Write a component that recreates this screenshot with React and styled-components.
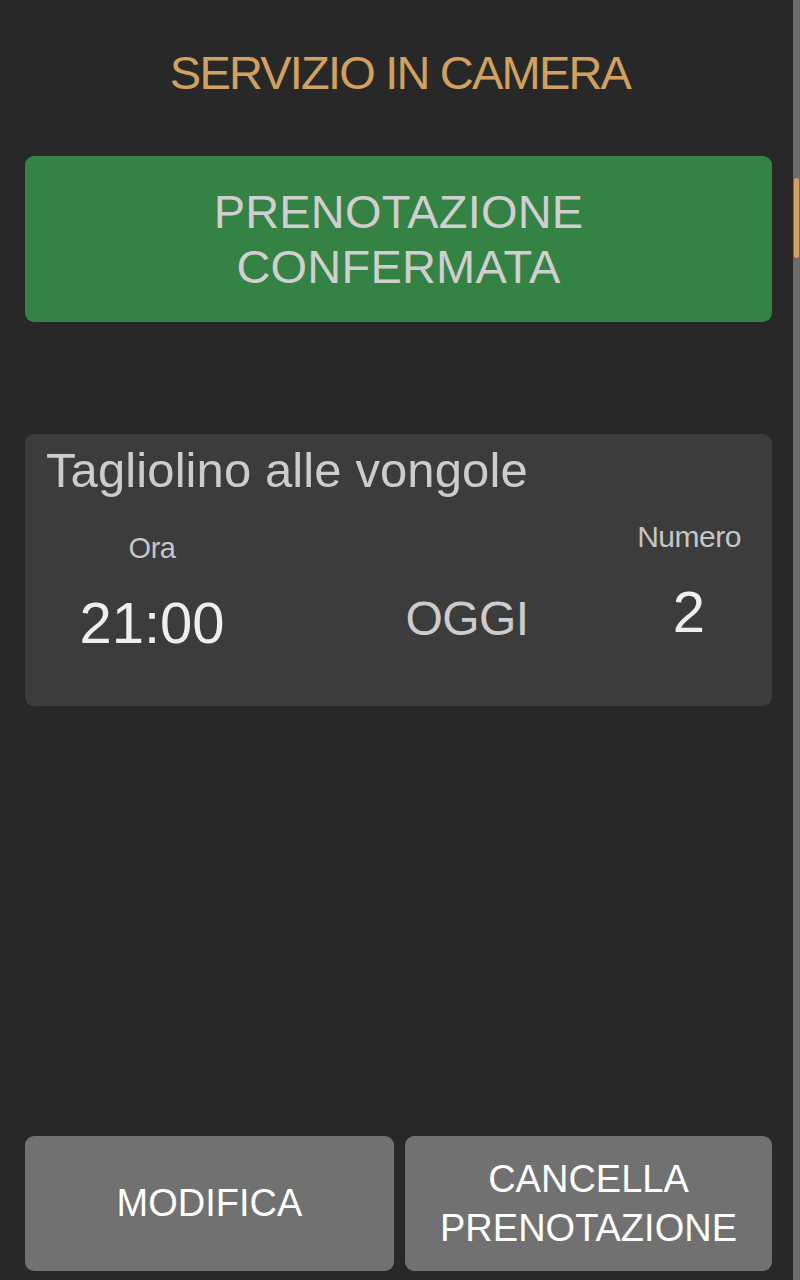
import React from "react";
import styled, { createGlobalStyle } from "styled-components";

const Global = createGlobalStyle`
  html, body {
    margin: 0;
    padding: 0;
    background: #282828;
  }
  body {
    font-family: "Liberation Sans", Arial, sans-serif;
    -webkit-font-smoothing: antialiased;
  }
  * { box-sizing: border-box; }
`;

const Page = styled.div`
  min-height: 100vh;
  display: flex;
  flex-direction: column;
  padding: 0 28px 9px 25px;
`;

const Title = styled.h1`
  margin: 45px 0 0 3px;
  font-size: 47px;
  line-height: 56px;
  font-weight: 400;
  letter-spacing: -1.8px;
  color: #d0a15f;
  text-align: center;
`;

const StatusBox = styled.div`
  margin-top: 55px;
  height: 166px;
  border-radius: 9px;
  background: #348244;
  color: #cfcfcf;
  display: flex;
  align-items: center;
  justify-content: center;
  text-align: center;
  font-size: 47px;
  line-height: 55px;
  letter-spacing: 0.2px;
`;

const Card = styled.section`
  margin-top: 112px;
  height: 272px;
  border-radius: 9px;
  background: #3c3c3c;
  padding: 8px 0 0 21px;
`;

const DishName = styled.h2`
  margin: 0;
  font-size: 49px;
  line-height: 56px;
  font-weight: 400;
  letter-spacing: 0.1px;
  color: #cccccc;
`;

const InfoRow = styled.div`
  display: grid;
  grid-template-columns: 212px 1fr 106px;
  align-items: start;
  margin: 33px 30px 0 0;
`;

const Column = styled.div`
  display: flex;
  flex-direction: column;
  align-items: center;
  margin-top: ${(p) => (p.$lift ? `-${p.$lift}px` : "0")};
  padding-top: ${(p) => (p.$offset ? `${p.$offset}px` : "0")};
  padding-left: ${(p) => (p.$shift ? `${p.$shift}px` : "0")};
`;

const Label = styled.div`
  font-size: ${(p) => p.$size || 29}px;
  line-height: 34px;
  color: #c6c6c6;
  letter-spacing: -0.5px;
`;

const Value = styled.div`
  margin-top: 26px;
  font-size: 58px;
  line-height: 64px;
  color: #eeeeee;
  letter-spacing: 0;
`;

const DayValue = styled.div`
  font-size: 48px;
  line-height: 56px;
  color: #cccccc;
  letter-spacing: -0.6px;
`;

const Actions = styled.div`
  margin-top: auto;
  display: grid;
  grid-template-columns: 369px 1fr;
  gap: 11px;
`;

const ActionButton = styled.button`
  height: 135px;
  border: none;
  border-radius: 9px;
  background: #717171;
  color: #ffffff;
  font-family: "Liberation Sans", Arial, sans-serif;
  font-size: 38px;
  line-height: 49px;
  letter-spacing: 0;
  text-align: center;
  padding: 0 6px;
  cursor: pointer;
`;

const ScrollTrack = styled.div`
  position: fixed;
  top: 0;
  right: 0;
  width: 7px;
  height: 100vh;
  background: #6a6a6a;
`;

const ScrollThumb = styled.div`
  position: absolute;
  top: 178px;
  left: 1px;
  width: 5px;
  height: 80px;
  border-radius: 3px;
  background: #cda262;
`;

export default function App() {
  return (
    <>
      <Global />
      <Page>
        <Title>SERVIZIO IN CAMERA</Title>
        <StatusBox>
          PRENOTAZIONE
          <br />
          CONFERMATA
        </StatusBox>
        <Card>
          <DishName>Tagliolino alle vongole</DishName>
          <InfoRow>
            <Column>
              <Label>Ora</Label>
              <Value>21:00</Value>
            </Column>
            <Column $offset={60} $shift={40}>
              <DayValue>OGGI</DayValue>
            </Column>
            <Column $lift={11}>
              <Label $size={30}>Numero</Label>
              <Value>2</Value>
            </Column>
          </InfoRow>
        </Card>
        <Actions>
          <ActionButton>MODIFICA</ActionButton>
          <ActionButton>
            CANCELLA
            <br />
            PRENOTAZIONE
          </ActionButton>
        </Actions>
      </Page>
      <ScrollTrack>
        <ScrollThumb />
      </ScrollTrack>
    </>
  );
}
